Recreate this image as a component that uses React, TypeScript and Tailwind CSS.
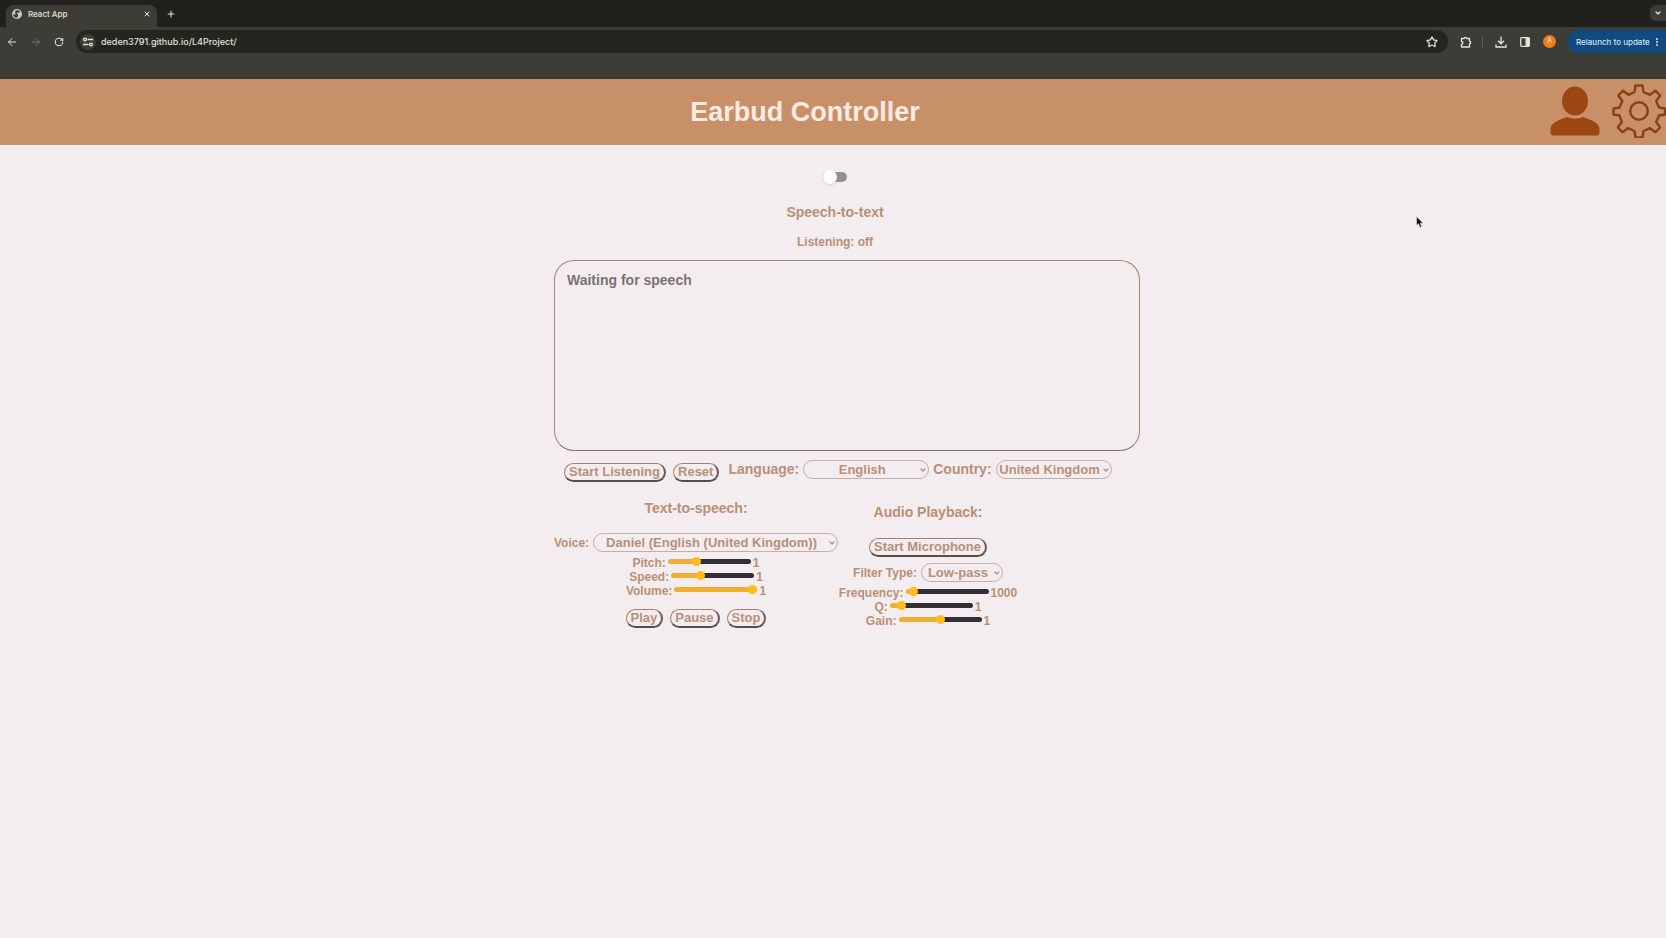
import { useState } from "react";
import type { ReactNode } from "react";
import { ArrowLeft, ArrowRight, ChevronDown, EllipsisVertical, Plus, RotateCw, Star, X } from "lucide-react";

function SiteSettingsIcon() {
  return (
    <svg viewBox="0 0 12 12" className="size-3" fill="none" stroke="currentColor" strokeWidth="1.3">
      <path d="M5.500 3.500H11M1 8.500h5.500" />
      <circle cx="3" cy="3.5" r="1.4" />
      <circle cx="9" cy="8.5" r="1.4" />
    </svg>
  );
}

function GlobeIcon() {
  return (
    <svg viewBox="0 0 12 12" className="size-2.5 text-[#c9cac5]" fill="currentColor">
      <path
        fillRule="evenodd"
        d="M6 0a6 6 0 1 0 0 12A6 6 0 0 0 6 0Zm1.2 1.4c1 .3 1.9 .9 2.5 1.7L8.5 4.6 6.3 4.2 5.8 5.6 7.5 6.7 7.2 8.6 5.8 10.6C3.2 10.5 1.3 8.5 1.3 6l2.4 1 .8-1.6L3.3 3.2C4 2.1 5.5 1.3 7.2 1.4Z"
      />
    </svg>
  );
}

function ExtensionsIcon() {
  return (
    <svg viewBox="0 0 12 12" className="size-3" fill="none" stroke="currentColor" strokeWidth="1.3" strokeLinejoin="round">
      <path d="M1.500 2.500H4.200a1.200 1.200 0 0 1 2.400 0H9.500V5.200a1.200 1.200 0 0 1 0 2.400V11H1.500V8.300a1.400 1.400 0 0 0 0-2.800Z" />
    </svg>
  );
}

function DownloadIcon() {
  return (
    <svg viewBox="0 0 12 12" className="size-3" fill="none" stroke="currentColor" strokeWidth="1.3">
      <path d="M6 .5V7.500M3 4.800 6 7.800 9 4.800M1 8.500V11H11V8.500" />
    </svg>
  );
}

function SidePanelIcon() {
  return (
    <svg viewBox="0 0 12 12" className="size-3">
      <rect x="1.7" y="1.7" width="8.6" height="8.6" rx="1" fill="none" stroke="currentColor" strokeWidth="1.3" />
      <rect x="6.5" y="1.7" width="4" height="8.6" fill="currentColor" />
    </svg>
  );
}

function PersonIcon() {
  return (
    <svg viewBox="0 0 50 50" className="h-[50px] w-[50px]" fill="#9c4614">
      <ellipse cx="25" cy="15" rx="13" ry="14.5" />
      <path d="M17 31Q25 34.500 33 31C40 33.500 49.500 36.500 49.500 43V46.500Q49.500 49.500 46.500 49.500H3.500Q.5 49.500 .5 46.500V43C.5 36.500 10 33.500 17 31Z" />
    </svg>
  );
}

function GearIcon() {
  return (
    <svg viewBox="0 0 54 54" className="size-[54px]" fill="none" stroke="#8c3f14" strokeWidth="2.4" strokeLinejoin="round">
      <path d="M23.500 1.500h7l1 6.500 6.500 2.800 5.500-4 4.700 4.700-4 5.500 2.800 6.500 6 1v6l-6 1-2.800 6.500 4 5.500-4.700 4.700-5.500-4-6.500 2.800-1 6.500h-7l-1-6.500-6.500-2.800-5.500 4-4.700-4.700 4-5.500L7.500 31.500l-6-1v-6l6-1 2.800-6.500-4-5.500 4.700-4.700 5.500 4L22.500 8Z" />
      <circle cx="27" cy="27" r="8.8" />
    </svg>
  );
}

function IconButton({ label, children, className = "" }: { label: string; children: ReactNode; className?: string }) {
  return (
    <button type="button" aria-label={label} className={`flex items-center justify-center ${className}`}>
      {children}
    </button>
  );
}

function BrowserChrome() {
  return (
    <div className="font-[Inter,Roboto,sans-serif] font-medium text-[#e3e3da]">
      <div className="flex h-[27px] items-end bg-[#20211d]">
        <div className="ml-1.5 flex h-[22px] w-[151px] items-center gap-1.5 rounded-t-lg bg-[#3d3d35] px-1.5 pb-1">
          <GlobeIcon />
          <span className="flex-1 text-[8px]">React App</span>
          <IconButton label="Close tab">
            <X className="size-2" strokeWidth={3} />
          </IconButton>
        </div>
        <IconButton label="New tab" className="ml-2 h-[26px] w-3">
          <Plus className="size-2.5" strokeWidth={2.5} />
        </IconButton>
        <IconButton label="Search tabs" className="mb-1.5 ml-auto h-4 w-4 rounded-l-md bg-[#3d3d35]">
          <ChevronDown className="size-2" strokeWidth={4} />
        </IconButton>
      </div>
      <div className="flex h-[52px] items-start bg-[#3d3d38] pt-[3px]">
        <div className="flex h-[23px] w-[76px] items-center gap-3 pl-1.5">
          <IconButton label="Back">
            <ArrowLeft className="size-3" />
          </IconButton>
          <IconButton label="Forward" className="text-[#74746c]">
            <ArrowRight className="size-3" />
          </IconButton>
          <IconButton label="Reload">
            <RotateCw className="size-2.5" strokeWidth={2.5} />
          </IconButton>
        </div>
        <div className="flex h-[23px] flex-1 items-center rounded-full bg-[#24251f] pr-2.5 pl-1">
          <span className="mr-[5px] flex size-4 items-center justify-center rounded-full bg-[#3d3d35]">
            <SiteSettingsIcon />
          </span>
          <input
            aria-label="Address"
            defaultValue="deden3791.github.io/L4Project/"
            className="h-4 min-w-0 flex-1 bg-transparent text-[9px] outline-none"
          />
          <IconButton label="Bookmark">
            <Star className="size-3" strokeWidth={2.5} />
          </IconButton>
        </div>
        <div className="flex h-[23px] items-center pl-3">
          <IconButton label="Extensions">
            <ExtensionsIcon />
          </IconButton>
          <span className="mr-3 ml-2.5 h-3 w-px bg-[#5c5c56]" />
          <IconButton label="Downloads">
            <DownloadIcon />
          </IconButton>
          <IconButton label="Side panel" className="ml-3">
            <SidePanelIcon />
          </IconButton>
          <IconButton label="Profile" className="ml-3 size-[13px] rounded-full bg-[#f47b14] text-[7px]">
            A
          </IconButton>
          <button type="button" className="ml-3 flex h-[23px] w-[98px] items-center justify-between rounded-l-full rounded-r-xl bg-[#104a80] pr-1 pl-2 text-[8px] whitespace-nowrap text-[#cfe4f4]">
            Relaunch to update
            <EllipsisVertical className="size-2.5" strokeWidth={3} />
          </button>
        </div>
      </div>
    </div>
  );
}

function PillButton({ children }: { children: ReactNode }) {
  return (
    <button type="button" className="h-[19px] rounded-full border border-r-2 border-b-2 border-[#a0806f] border-r-[#6f5a55] border-b-[#594a4c] px-1 text-[13px] leading-4 whitespace-nowrap">
      {children}
    </button>
  );
}

interface PickerProps {
  id: string;
  value: string;
  width: string;
}

function Picker({ id, value, width }: PickerProps) {
  return (
    <span className={`relative inline-flex ${width}`}>
      <select id={id} className="h-[19px] w-full appearance-none rounded-full border border-[#c3aea8] bg-transparent pr-2.5 pl-0.5 text-[13px] leading-4 [text-align-last:center]">
        <option>{value}</option>
      </select>
      <ChevronDown className="pointer-events-none absolute top-1.5 right-0.5 size-2" strokeWidth={4} />
    </span>
  );
}

interface SliderProps {
  id: string;
  label: string;
  start: number;
  min: number;
  max: number;
  step: number;
}

function SliderRow({ id, label, start, min, max, step }: SliderProps) {
  const [value, setValue] = useState(start);
  const filled = ((value - min) / (max - min)) * 100;
  return (
    <div className="flex h-3.5 items-center justify-center gap-0.5 text-[12px] leading-[14px]">
      <label htmlFor={id}>{label}</label>
      <input
        id={id}
        type="range"
        min={min}
        max={max}
        step={step}
        value={value}
        onChange={(event) => setValue(Number(event.target.value))}
        className="mb-[3px] h-[5px] w-[83px] appearance-none rounded-full [&::-webkit-slider-thumb]:size-[9px] [&::-webkit-slider-thumb]:appearance-none [&::-webkit-slider-thumb]:rounded-full [&::-webkit-slider-thumb]:bg-[#ffbc1c]"
        style={{ background: `linear-gradient(to right, #efaf32 ${filled}%, #332d35 ${filled}%)` }}
      />
      <output htmlFor={id}>{value}</output>
    </div>
  );
}

function Cursor() {
  return (
    <svg viewBox="0 0 8 12" className="absolute top-[216px] left-[85%] h-3 w-2">
      <path d="M.5.5v9l2-1.8L4 11.5l1.7-.7L4.2 7.3h2.9Z" fill="#111" stroke="#fff" strokeWidth=".5" />
    </svg>
  );
}

export default function App() {
  const [on, setOn] = useState(false);
  return (
    <div className="relative min-h-screen bg-[#f4edf0] font-['Liberation_Sans',Arial,sans-serif] font-bold text-[#b98f76]">
      <BrowserChrome />
      <header className="flex h-[66px] items-center bg-[#c89069]">
        <h1 className="flex-1 pl-[60px] text-center text-[27px] leading-8 text-[#fcebe2]">Earbud Controller</h1>
        <div className="flex items-center gap-3 pb-0.5">
          <IconButton label="Profile page">
            <PersonIcon />
          </IconButton>
          <IconButton label="Settings">
            <GearIcon />
          </IconButton>
        </div>
      </header>
      <main className="flex flex-col items-center pt-6 pl-1">
        <label className="flex h-4 w-6 items-center">
          <input type="checkbox" role="switch" aria-label="Listen" checked={on} onChange={() => setOn(!on)} className="peer sr-only" />
          <span className="flex h-2.5 w-6 items-center rounded-full bg-[#929090] peer-checked:justify-end">
            <span className="size-3.5 shrink-0 rounded-full bg-white shadow-sm" />
          </span>
        </label>
        <h2 className="mt-[19px] text-[14px] leading-4">Speech-to-text</h2>
        <p className="mt-3.5 text-[12px] leading-4">Listening: {on ? "on" : "off"}</p>
        <div className="mt-2.5 flex w-[610px] flex-col">
          <div className="flex pl-6">
            <textarea
              aria-label="Recognised speech"
              placeholder="Waiting for speech"
              className="h-[191px] w-full resize rounded-[20px] border border-[#a5876f] border-b-[#85746f] bg-transparent px-3 py-2.5 text-[14px] leading-[18px] outline-none placeholder:text-[#7a7270] [&::-webkit-resizer]:bg-transparent"
            />
          </div>
          <div className="flex items-start gap-1 pt-[9px] pl-[34px] text-[14px] leading-[19px] whitespace-nowrap">
            <div className="mr-[5px] flex gap-[7px] pt-[3px]">
              <PillButton>Start Listening</PillButton>
              <PillButton>Reset</PillButton>
            </div>
            <label htmlFor="language">Language:</label>
            <Picker id="language" value="English" width="w-[126px]" />
            <label htmlFor="country">Country:</label>
            <Picker id="country" value="United Kingdom" width="w-[116px]" />
          </div>
          <div className="flex items-start gap-0.5 pl-6">
            <section className="flex w-[284px] flex-col items-center pt-[18px]">
              <h2 className="text-[14px] leading-4">Text-to-speech:</h2>
              <div className="mt-[17px] flex items-center gap-1 text-[12px] leading-4 whitespace-nowrap">
                <label htmlFor="voice">Voice:</label>
                <Picker id="voice" value="Daniel (English (United Kingdom))" width="w-[245px]" />
              </div>
              <div className="mt-1">
                <SliderRow id="pitch" label="Pitch:" start={1} min={0.5} max={2} step={0.1} />
                <SliderRow id="speed" label="Speed:" start={1} min={0.5} max={2} step={0.1} />
                <SliderRow id="volume" label="Volume:" start={1} min={0} max={1} step={0.1} />
              </div>
              <div className="mt-[11px] flex gap-[7px]">
                <PillButton>Play</PillButton>
                <PillButton>Pause</PillButton>
                <PillButton>Stop</PillButton>
              </div>
            </section>
            <section className="flex w-[176px] flex-col items-center pt-[22px]">
              <h2 className="text-[14px] leading-4">Audio Playback:</h2>
              <div className="mt-[18px] flex">
                <PillButton>Start Microphone</PillButton>
              </div>
              <div className="mt-1.5 flex items-center gap-1 text-[12px] leading-4">
                <label htmlFor="filter">Filter Type:</label>
                <Picker id="filter" value="Low-pass" width="w-[82px]" />
              </div>
              <div className="mt-1">
                <SliderRow id="frequency" label="Frequency:" start={1000} min={20} max={20000} step={10} />
                <SliderRow id="q" label="Q:" start={1} min={0} max={10} step={0.1} />
                <SliderRow id="gain" label="Gain:" start={1} min={0} max={2} step={0.1} />
              </div>
            </section>
          </div>
        </div>
      </main>
      <Cursor />
    </div>
  );
}
